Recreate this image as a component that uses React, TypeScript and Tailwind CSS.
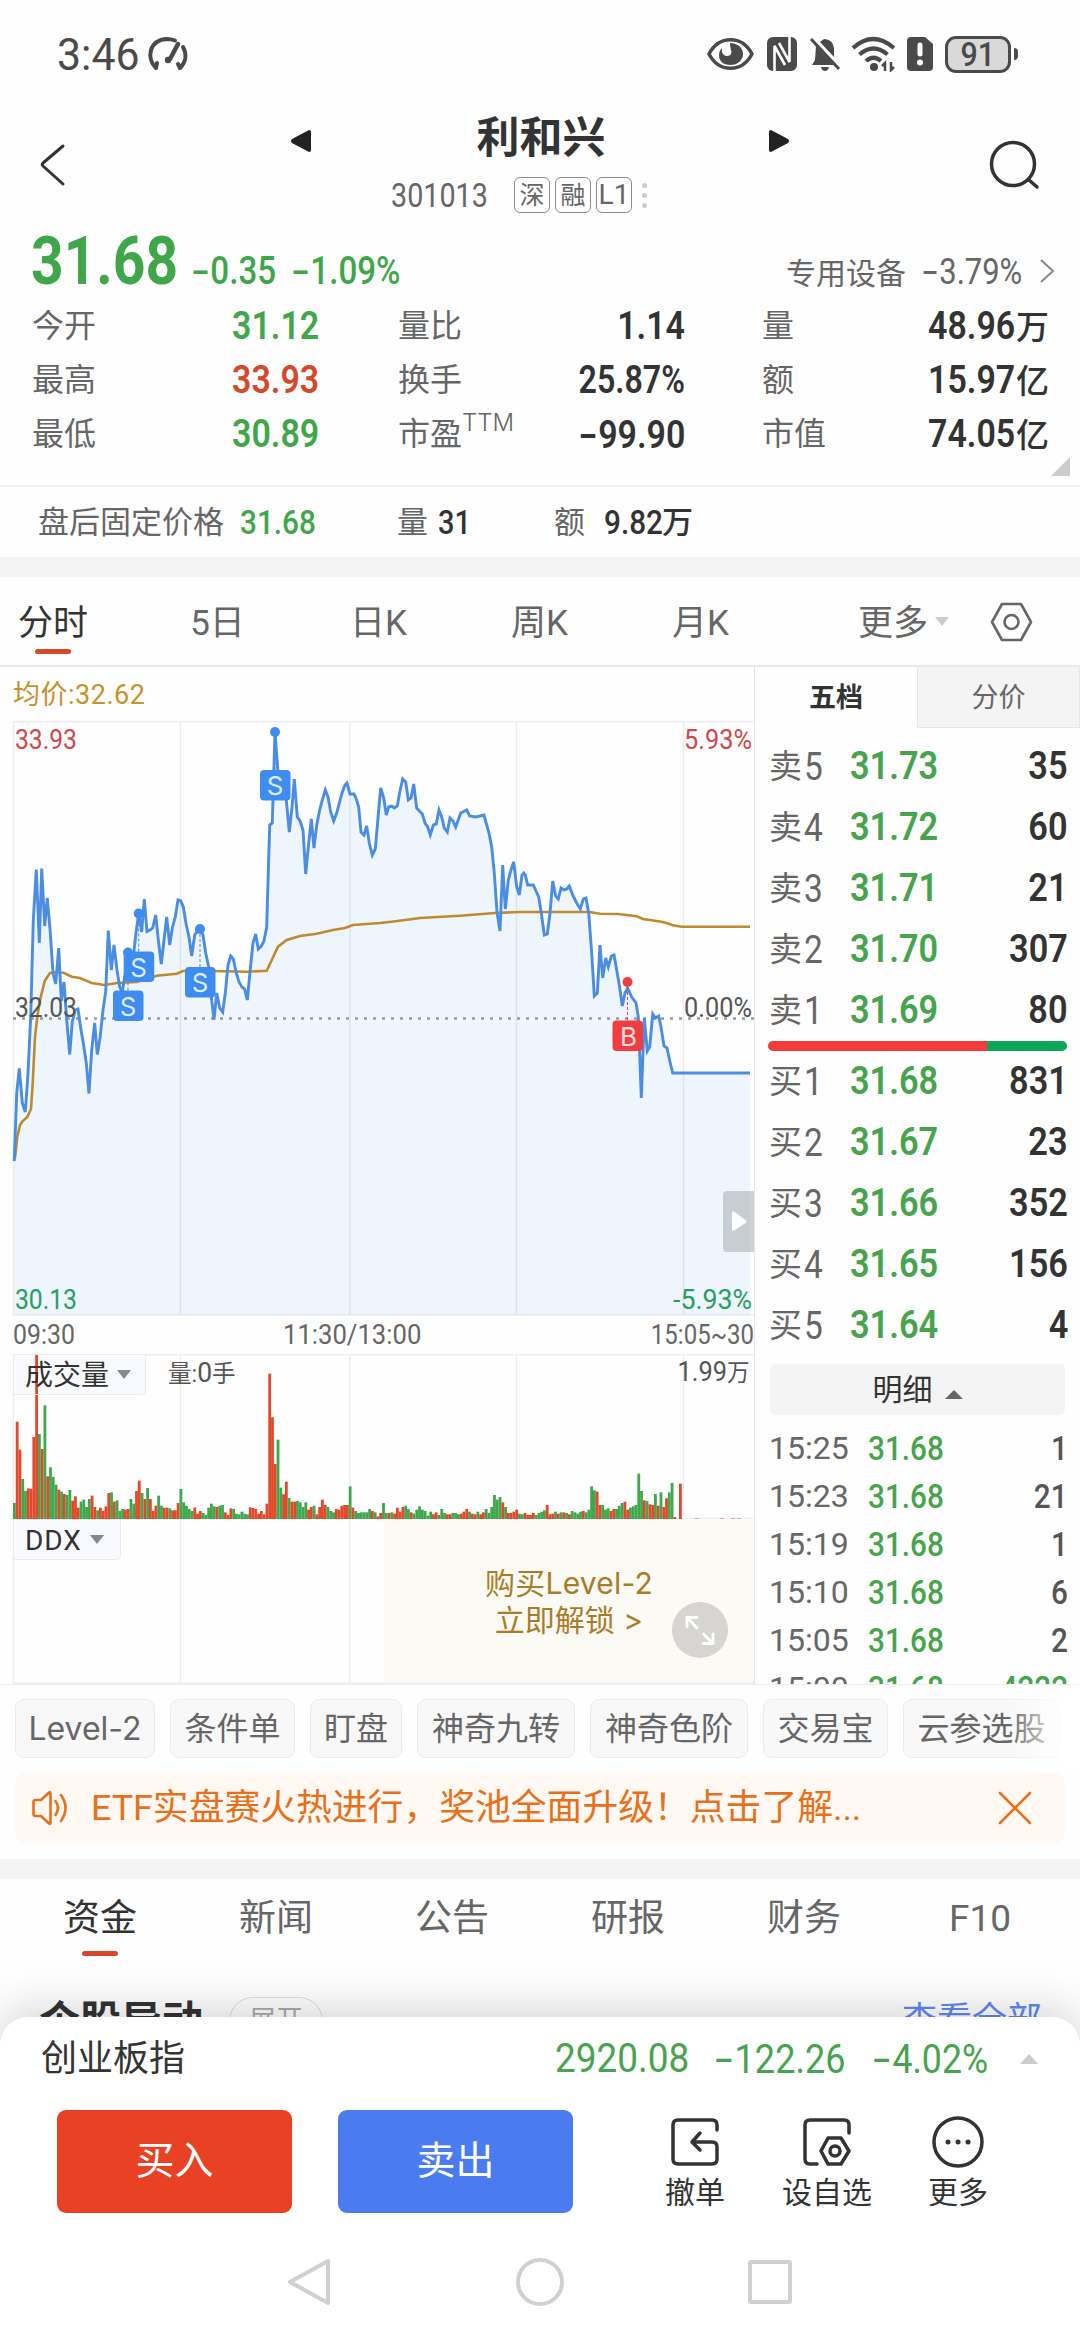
import type { ReactNode } from 'react'
import clsx from 'clsx'

const PRICE_POINTS =
  '14.3,1161 16.7,1093 19.3,1068.5 22.3,1103 25.3,1112 28,1073 30.7,1017 33.3,920 36.3,869.5 39.3,943 41.7,868.5 44.7,926 47.3,898 50.3,933 53,973 55.7,984 58.7,948 61.3,1001 64,982 66.7,1020 69.7,1054.5 72.3,1021.5 75.3,1010 78,1009 80.7,1028 83.3,1043 86.3,1063 89,1093.5 91.7,1050 94.7,1023 97.3,1054.5 100,1038 103,1010 105.7,991.5 108.3,930.5 111.3,970 114,945 117,970 119.7,987 122.3,992 125,975 128,952.5 131,963 133.3,957 136,933 138.7,913 141.7,932 144.3,899 147,931.5 150,930 152.7,928 155.7,915 158.3,940 161.3,964 164,940 166.7,917 169.7,945 172.3,928 175.3,917 178,900 180.7,901 183.3,907 186.3,925 189,937 191.7,956 194.7,935 197.3,931 200,929 203,935 205.7,953 208.7,967 211.3,997 214,1019.5 216.7,993 219.7,1008 222.7,1012 225.3,993 228,965 230.7,956 233.3,959 236.3,973 239,982 242,987 244.7,989 247.3,1000 250,972 253,943 255.7,934 258.3,949 261.3,946 264,941 266.7,927 269.7,825 272.3,823 275,732 278,772 281,783 284,782 286.3,800 289.3,832 292,807 294.3,779 297.3,817 300,821 303,830 305.7,874 308.3,847 311.3,819 314,848 316.7,825 319.7,810 322.3,800 325.3,790 328,797 330.7,812 333.7,821 336.7,813 339.3,803 342,793 345,785 347,783 350,794 354,794 356,798 358.7,807 361,832 364,835 366.7,826 369.3,843 372.3,855 375.3,849 378,818 380.7,788 383.7,798 386.3,815 388.7,807 391.7,806 394.3,808 397.3,806 400,791 402.7,779 405.7,782 408.3,800 411,798 413.7,784 416.7,808 422.3,814 425,823 427.7,827 430.3,835 433.3,825 436.3,824 439,810 441.7,817 444.3,828 447.3,832 450,818 453,821 455.7,827 460.7,813 466.7,810 469.7,816 475.7,817 484,815 486.7,825 489,833 491.7,847 494.3,873 497,912 500,931 502.7,865 505.3,909 508.3,880 511,870 513.7,862 516.7,887 519.3,895 522,875 523.7,873 525.3,875 527.7,885 533.3,885 536,891 538.7,897 541.3,913 544.3,935 547.3,934 550,913 552.7,881 555.7,896 558.3,899 561,888 564,890 566.7,889 569.3,886 572.7,895 576.7,903 580.3,909 583.3,899 586,898 588.7,913 591.7,953 594.3,996 597.3,993 600,945 602.7,978 605.7,958 608.3,967 611.3,956 614,955 616.7,970 619.3,985 622.3,1006 625,993 627.7,988 631.7,997 636,1003 638.3,1017 641.3,1098 644.3,1018 647.3,1051 649.7,1047 652.7,1014 655.3,1018 658.7,1016 661,1027 664,1046 667,1048 670,1062 672.7,1073 750,1073'

const AVG_POINTS =
  '15,1158 17.3,1137 20,1125 22.7,1121 27.3,1117 31,1109 32.7,1083 35,1037 37.3,1017 40,1000 44.7,981 50,973 56,972 63.3,972.7 71.7,976.7 80,978 91.7,983 104.3,985 117,983 136.7,982 156.7,975.7 176.7,973.7 183,971 213,971 247,971.7 266.7,970.7 272.7,958 278,946.7 286.7,940 300,936 316.7,933.7 333,930 345,928 353,925 380,923 391.7,921.7 420,918 460,915.7 495,913 520,912 590,912 600,913.7 618,914 636.7,916.3 643,919 663,922 673,925.3 681.7,926.7 750,926.7'

// r = up minute, g = down minute, the number is the bar height
const VOLUME =
  'g48 r292 r208 g120 g84 r92 r90 r246 r492 g255 r210 g341 r128 g155 g126 g103 r88 g82 r75 g72 g87 r55 r68 r34 g52 g58 g36 g60 r70 r36 g26 r34 r24 r38 r78 g80 r52 g56 g24 g30 r28 r30 g60 g46 r84 r115 g78 r60 g93 r60 r24 r40 g70 g40 r34 r34 g32 r26 r26 r48 g90 g50 g40 g30 g24 r34 r16 r24 g18 g12 g34 g46 g38 r36 g40 g42 r20 r12 r32 g30 g16 g14 g22 g16 g14 r35 r33 r30 r16 r24 r14 r46 r436 r305 r165 g238 g94 r74 r112 g63 r52 r52 g54 g50 g36 g50 r28 r36 g40 r14 r36 r58 r42 g36 g24 g20 r30 r28 r40 r42 r42 g98 r34 g24 g18 g20 g20 g20 g30 r24 g20 r8 r18 g48 g18 r18 g20 r16 r34 r22 r36 g40 g30 r20 g16 g28 g38 g28 g24 g10 g22 r14 r20 g12 g30 g18 r14 r14 g18 g18 g14 r16 r22 r30 g22 r16 r14 g22 r14 r20 g30 g18 g36 g72 g58 g66 r50 g36 r18 r18 r22 r28 g16 g14 r18 r12 r12 r18 g12 g18 g22 g26 r42 r14 r16 g22 r16 g20 r20 g18 r14 g24 g20 g16 g22 r24 g20 g28 g98 g86 r82 r42 g42 g28 g32 r24 r30 g30 g40 g48 r52 r28 g34 g38 g42 g136 g84 r56 g54 r44 r42 g75 r40 g80 r36 r62 g80 g108 r6 r0 r106'

const volumeBars = VOLUME.split(' ').map((item, i) => ({
  x: 14 + i * 2.775,
  h: Number(item.slice(1)) / 3,
  up: item[0] === 'r',
}))

const quoteRows = [
  [
    { label: '今开', value: '31.12', color: 'text-[#3fa64a]' },
    { label: '量比', value: '1.14' },
    { label: '量', value: '48.96', unit: '万' },
  ],
  [
    { label: '最高', value: '33.93', color: 'text-[#d6482c]' },
    { label: '换手', value: '25.87%', scale: 'origin-right scale-x-[0.825]' },
    { label: '额', value: '15.97', unit: '亿' },
  ],
  [
    { label: '最低', value: '30.89', color: 'text-[#3fa64a]' },
    { label: '市盈', sup: 'TTM', value: '-99.90' },
    { label: '市值', value: '74.05', unit: '亿' },
  ],
]

const sells = [
  ['卖5', '31.73', '35'],
  ['卖4', '31.72', '60'],
  ['卖3', '31.71', '21'],
  ['卖2', '31.70', '307'],
  ['卖1', '31.69', '80'],
]

const buys = [
  ['买1', '31.68', '831'],
  ['买2', '31.67', '23'],
  ['买3', '31.66', '352'],
  ['买4', '31.65', '156'],
  ['买5', '31.64', '4'],
]

const trades = [
  ['15:25', '31.68', '1'],
  ['15:23', '31.68', '21'],
  ['15:19', '31.68', '1'],
  ['15:10', '31.68', '6'],
  ['15:05', '31.68', '2'],
  ['15:00', '31.68', '4222'],
]

const chips = [
  { text: 'Level-2', width: 'w-[140px]' },
  { text: '条件单', width: 'w-[125px]' },
  { text: '盯盘', width: 'w-[92px]' },
  { text: '神奇九转', width: 'w-[158px]' },
  { text: '神奇色阶', width: 'w-[158px]' },
  { text: '交易宝', width: 'w-[125px]' },
  { text: '云参选股', width: 'w-[157px]' },
]

const markers = [
  { x: 275, dot: 732, box: 770 },
  { x: 128, dot: 952.5, box: 990.5 },
  { x: 138.7, dot: 913.5, box: 951.5 },
  { x: 200, dot: 929, box: 967 },
]

// Condensed digits, the minus sign is wider than Roboto's own
function Num({ children, className }: { children: string; className?: string }) {
  const negative = children.startsWith('-')
  return (
    <span className={clsx('inline-block whitespace-nowrap', className ?? 'origin-left scale-x-[0.88]')}>
      {negative && <span className="inline-block origin-right scale-x-[1.3] font-['Inter']">-</span>}
      {negative ? children.slice(1) : children}
    </span>
  )
}

function StatusBar() {
  return (
    <div className="flex h-[105px] items-center pt-[3px] text-[#4a4a4a]">
      <div className="w-[90px] pl-[57px] text-[45px]">
        <Num className="origin-left scale-x-[0.95]">3:46</Num>
      </div>
      <svg className="ml-[57px] h-[36px] w-[42px]" viewBox="0 0 42 36" fill="none" stroke="#4a4a4a" strokeWidth="4" strokeLinecap="round">
        <path d="M9 32C-1 22 2 4 20 3q4 0 8 1.500M36 11c4 7 3 15-3 21M9 32l1-5M33 32l-2-4" />
        <path d="M31 8 23 23" strokeWidth="4.500" />
        <circle cx="21" cy="24" r="3.200" fill="#4a4a4a" stroke="none" />
      </svg>

      <div className="ml-[518px] flex items-center">
        <svg className="h-[36px] w-[47px]" viewBox="0 0 47 36">
          <path d="M2 18C12-1 35-1 45 18 35 37 12 37 2 18z" fill="none" stroke="#4a4a4a" strokeWidth="3.500" />
          <path d="M23 7c8 0 13 5 13 11s-5 11-12.500 11S12 25 12 19c0-3 1-5 3-7-1 5 2 8 5 8 4 0 5-3 4-6-.6-3-1-5-1-7z" fill="#4a4a4a" />
        </svg>
        <svg className="ml-[12px] h-[34px] w-[32px]" viewBox="0 0 32 34" fill="none">
          <rect x="1" width="30" height="34" rx="6" fill="#4a4a4a" />
          <path d="M8.500 34V9L19 28M23.500 0v25L13 6" stroke="#fefefe" strokeWidth="2.600" />
        </svg>
        <svg className="ml-[10px] h-[36px] w-[34px]" viewBox="0 0 34 36">
          <path d="M8 10 26 29H4l3-5zM12 6q3-3 5-3 8 1 9 9v9z" fill="#4a4a4a" />
          <path d="M3 3l28 30" stroke="#4a4a4a" strokeWidth="3" />
          <path d="M13 31h8q-1 4-4 4t-4-4z" fill="#4a4a4a" />
        </svg>
        <svg className="ml-[9px] h-[36px] w-[46px]" viewBox="0 0 46 36" fill="none" stroke="#4a4a4a" strokeWidth="4.200">
          <path d="M2 12q20-18 41 0M8.500 18.500q14-12 28 0M15 25q7.500-6.500 15 0" />
          <circle cx="23" cy="31" r="4" fill="#4a4a4a" stroke="none" />
          <path d="M34 35v-8l-3 3M40 26v8l3-3" strokeWidth="2.500" />
        </svg>
        <svg className="ml-[9px] h-[34px] w-[28px]" viewBox="0 0 28 34">
          <path d="M5 0h14l8 7v23q0 4-4 4H5q-4 0-4-4V4q0-4 4-4z" fill="#4a4a4a" />
          <path d="M14 8v9" stroke="#fff" strokeWidth="5" strokeLinecap="round" />
          <circle cx="14" cy="25.500" r="3" fill="#fff" />
        </svg>
        <div className="ml-[11px] flex h-[37px] w-[66px] items-center justify-center rounded-[11px] border-[3px] border-[#4a4a4a] bg-[#d9d9d9] text-[33px] font-medium">
          <Num className="scale-x-[0.92]">91</Num>
        </div>
        <div className="ml-[3px] h-[12px] w-[4px] rounded-r-full bg-[#4a4a4a]" />
      </div>
    </div>
  )
}

function Tag({ children }: { children: ReactNode }) {
  return (
    <span className="mr-[5px] flex h-[36px] w-[36px] items-center justify-center rounded-[6px] border border-[#8c8c8c] text-[25px]">
      {children}
    </span>
  )
}

function Header() {
  return (
    <div className="flex h-[116px] text-[#333]">
      <svg className="mt-[38px] ml-[39px] h-[44px] w-[28px]" viewBox="0 0 28 44" fill="none" stroke="#333" strokeWidth="3" strokeLinecap="round" strokeLinejoin="round">
        <path d="M24 3 4 20q-1.500 1.500 0 3L24 41" />
      </svg>
      <div className="ml-[224px] flex w-[498px] flex-col">
        <div className="flex h-[64px] items-center justify-between">
          <svg className="mt-[8px] h-[22px] w-[20px]" viewBox="0 0 20 22">
            <path d="M18 0q2 0 2 2v18q0 2-2 2L1 13q-2-2 0-4z" fill="#222" />
          </svg>
          <h1 className="mt-[3px] ml-[2px] text-[43px] font-bold">利和兴</h1>
          <svg className="mt-[8px] h-[22px] w-[20px]" viewBox="0 0 20 22">
            <path d="M2 0Q0 0 0 2v18q0 2 2 2l17-9q2-2 0-4z" fill="#222" />
          </svg>
        </div>
        <div className="flex h-[52px] items-center pl-[100px] text-[#666]">
          <div className="w-[123px] text-[33px]">
            <Num className="origin-left scale-x-[0.87]">301013</Num>
          </div>
          <Tag>深</Tag>
          <Tag>融</Tag>
          <Tag>
            <span className="text-[28px]">L1</span>
          </Tag>
          <div className="ml-[5px] flex flex-col gap-[5px]">
            <span className="h-[5px] w-[5px] rounded-full bg-[#ccc]" />
            <span className="h-[5px] w-[5px] rounded-full bg-[#ccc]" />
            <span className="h-[5px] w-[5px] rounded-full bg-[#ccc]" />
          </div>
        </div>
      </div>
      <svg className="mt-[33px] ml-[199px] h-[54px] w-[54px]" viewBox="0 0 54 54" fill="none" stroke="#333" strokeWidth="3.500" strokeLinecap="round">
        <circle cx="25" cy="26" r="21.500" />
        <path d="M41 42l8 7" />
      </svg>
    </div>
  )
}

function Quote() {
  return (
    <div className="text-[#666]">
      <div className="flex h-[78px] items-baseline pt-[7px] text-[#3fa64a]">
        <div className="w-[163px] pl-[31px] text-[67px] font-bold">
          <Num className="origin-left scale-x-[0.85]">31.68</Num>
        </div>
        <div className="ml-[32px] w-[100px] text-[39px] font-medium">
          <Num className="origin-left scale-x-[0.85]">-0.35</Num>
        </div>
        <div className="w-[130px] text-[39px] font-medium">
          <Num className="origin-left scale-x-[0.85]">-1.09%</Num>
        </div>
        <div className="ml-[361px] text-[30px] text-[#666]">专用设备</div>
        <div className="ml-[19px] w-[113px] text-[36px] text-[#666]">
          <Num className="origin-left scale-x-[0.86]">-3.79%</Num>
        </div>
        <svg className="ml-[1px] h-[26px] w-[16px]" viewBox="0 0 16 26" fill="none" stroke="#888" strokeWidth="2">
          <path d="M2 2l12 11L2 24" />
        </svg>
      </div>

      {quoteRows.map((row, r) => (
        <div key={r} className="grid h-[54px] grid-cols-[287px_286px_286px] items-center gap-x-[79px] pl-[32px]">
          {row.map((cell, c) => (
            <div
              key={c}
              className={clsx(
                'flex items-center justify-between',
                c === 0 ? 'w-[287px]' : c === 1 ? 'w-[287px]' : '-ml-px w-[287px]',
              )}
            >
              <div className="flex text-[32px]">
                {cell.label}
                {'sup' in cell && <span className="-mt-[7px] font-['Inter'] text-[24px] font-light">{cell.sup}</span>}
              </div>
              <div className={clsx('flex items-baseline text-[39px] font-semibold', cell.color ?? 'text-[#333]')}>
                <Num className={cell.scale ?? 'origin-right scale-x-[0.87]'}>{cell.value}</Num>
                {cell.unit && <span className="ml-px text-[33px] font-medium">{cell.unit}</span>}
              </div>
            </div>
          ))}
        </div>
      ))}

      <div className="flex h-[24px] justify-end pr-[10px]">
        <svg className="-mt-[4px] h-[19px] w-[19px]" viewBox="0 0 19 19">
          <path d="M19 0v19H0z" fill="#ccc" />
        </svg>
      </div>
      <div className="flex h-[72px] items-center border-t-2 border-[#f2f2f2] text-[31px]">
        <span className="ml-[38px] w-[202px]">盘后固定价格</span>
        <span className="w-[157px] text-[33px] font-medium text-[#3fa64a]">
          <Num className="origin-left scale-x-[0.9]">31.68</Num>
        </span>
        <span className="w-[41px]">量</span>
        <span className="w-[116px] text-[33px] font-medium text-[#333]">
          <Num>31</Num>
        </span>
        <span className="w-[50px]">额</span>
        <span className="w-[58px] text-[33px] font-medium text-[#333]">
          <Num className="origin-left scale-x-[0.9]">9.82</Num>
        </span>
        <span className="font-medium text-[#333]">万</span>
      </div>
      <div className="h-[20px] bg-[#f4f4f4]" />
    </div>
  )
}

function ChartTabs() {
  return (
    <div className="flex h-[90px] border-b-2 border-[#e9e9e9] pt-[23px] text-[35px] text-[#666]">
      <div className="w-[137px] pl-[18px] text-[#333]">
        <div className="flex h-[46px] w-[70px] items-center">分时</div>
        <div className="mt-[3px] ml-[17px] h-[5px] w-[36px] rounded-full bg-[#d9472b]" />
      </div>
      {['5日', '日K', '周K', '月K'].map((tab) => (
        <div key={tab} className="flex h-[46px] w-[161px] items-center justify-center">
          {tab}
        </div>
      ))}
      <div className="ml-[77px] flex h-[46px] w-[77px] items-center">更多</div>
      <svg className="mt-[17px] h-[9px] w-[14px]" viewBox="0 0 14 9">
        <path d="M0 0h14L7 9z" fill="#ccc" />
      </svg>
      <svg className="mt-[1px] ml-[41px] h-[42px] w-[44px]" viewBox="0 0 44 42" fill="none" stroke="#666" strokeWidth="2.600" strokeLinejoin="round">
        <path d="M12 3h19l10 18-10 18H12L2 21z" />
        <circle cx="21.500" cy="21" r="7" />
      </svg>
    </div>
  )
}

function PriceChart() {
  return (
    <svg className="block h-[595px] w-[754px]" viewBox="0 721 754 595" fontFamily="Roboto" fontSize="27">
      <polygon points={`14.3,1315 ${PRICE_POINTS} 750,1315`} fill="#eef5fd" />
      <g stroke="#000" strokeOpacity="0.07" strokeWidth="1.500">
        <path d="M13 721.500h741M13 1315h741M13.500 721v594M180.500 721v594M350 721v594M516.500 721v594M683.500 721v594" />
      </g>
      <path d="M13 1018.500h741" stroke="#999" strokeWidth="2.500" strokeDasharray="3 6" />
      <polyline points={AVG_POINTS} fill="none" stroke="#c08a2c" strokeWidth="2.600" />
      <polyline points={PRICE_POINTS} fill="none" stroke="#4a8de2" strokeWidth="2.900" />

      {markers.map((m) => (
        <g key={m.x}>
          <path d={`M${m.x} ${m.dot}V${m.box}`} stroke="#3f8cf0" strokeDasharray="3 2" />
          <circle cx={m.x} cy={m.dot} r="5" fill="#3f8cf0" />
          <rect x={m.x - 15} y={m.box} width="30.500" height="30.500" rx="4" fill="#3f8cf0" />
          <text x={m.x} y={m.box + 25} textAnchor="middle" fontFamily="Inter" fontSize="26" fill="#dcebff">
            S
          </text>
        </g>
      ))}
      <path d="M627.500 982v40" stroke="#e0405a" strokeDasharray="3 2" />
      <circle cx="627.500" cy="982" r="5" fill="#f13d40" />
      <rect x="612.500" y="1020.500" width="30.500" height="30.500" rx="4" fill="#f13d40" />
      <text x="628.500" y="1045.500" textAnchor="middle" fontFamily="Inter" fontSize="26" fill="#ffe0e0">
        B
      </text>

      <text x="15" y="748.500" fill="#d04848" textLength="62" lengthAdjust="spacingAndGlyphs">33.93</text>
      <text x="684" y="748.500" fill="#d04848" textLength="68" lengthAdjust="spacingAndGlyphs">5.93%</text>
      <text x="15" y="1016.500" fill="#555" textLength="62" lengthAdjust="spacingAndGlyphs">32.03</text>
      <text x="684" y="1016.500" fill="#555" textLength="68" lengthAdjust="spacingAndGlyphs">0.00%</text>
      <text x="15" y="1308.500" fill="#26a060" textLength="62" lengthAdjust="spacingAndGlyphs">30.13</text>
      <text x="673" y="1308.500" fill="#26a060" textLength="79" lengthAdjust="spacingAndGlyphs">-5.93%</text>

      <path d="M754 1191h-27q-4 0-4 4v53q0 4 4 4h27z" fill="#a9abae" fillOpacity="0.550" />
      <path d="M732 1212.500q0-2 2-1l12 9q1 1 0 2l-12 8q-2 1-2-1z" fill="#fff" />
    </svg>
  )
}

function IndicatorTab({ label, width }: { label: string; width: string }) {
  return (
    <div className={clsx('absolute top-0 left-[13px] flex h-[41px] items-center rounded-br-[4px] border border-[#ebebef] pt-[2px] pl-[11px] text-[28px] text-[#333]', width)}>
      {label}
      <svg className="mb-[2px] ml-[8px] h-[9px] w-[14px]" viewBox="0 0 14 9">
        <path d="M0 0h14L7 9z" fill="#888" />
      </svg>
    </div>
  )
}

function VolumeChart() {
  return (
    <div className="relative h-[165px]">
      <svg className="block h-[165px] w-[754px]" viewBox="0 0 754 165">
        <path d="M13 .7h741M13.500 0v165M180.500 0v165M350 0v165M516.500 0v165M683.500 0v165M13 164.500h741" stroke="#ededed" strokeWidth="1.500" fill="none" />
        <rect x="14" y="1" width="132" height="39" fill="#f9faff" />
        {volumeBars.map((bar, i) => (
          <rect key={i} x={bar.x - 1} y={165 - bar.h} width="2.800" height={bar.h} fill={bar.up ? '#e3482b' : '#3fa84c'} />
        ))}
        <path d="M695 164.500h4M720 164.500h4M731 164.500h4M737 164.500h4" stroke="#e8a090" />
      </svg>
      <IndicatorTab label="成交量" width="w-[133px]" />
      <div className="absolute top-[6px] left-[168px] origin-left scale-x-[0.98] text-[24px] text-[#555]">
        量:<span className="text-[27px]">0</span>手
      </div>
      <div className="absolute top-[5px] right-[4px] origin-right scale-x-[0.94] text-[27px] text-[#555]">
        1.99<span className="text-[24px]">万</span>
      </div>
    </div>
  )
}

function DdxPanel() {
  return (
    <div className="relative flex h-[165px] justify-end">
      <svg className="absolute inset-0 h-[165px] w-[754px]" viewBox="0 0 754 165">
        <path d="M13.500 0v164M180.500 0v164M350 0v164M13 164.300h741" stroke="#ededed" strokeWidth="1.500" />
        <rect x="14" y="1" width="107" height="39" fill="#f9faff" />
      </svg>
      <IndicatorTab label="DDX" width="w-[108px] tracking-[0.9px]" />
      <div className="flex h-[163px] w-[370px] flex-col items-center pt-[46px] font-['Inter','Noto_Sans_CJK_SC',sans-serif] text-[30px] leading-[37px] text-[#ab7c28]">
        <span className="relative tracking-[0.2px]">购买Level-2</span>
        <span className="relative">立即解锁 &gt;</span>
      </div>
      <div className="absolute top-[1px] right-0 -z-10 h-[163px] w-[370px] bg-[#fbfaf5]" />
      <svg className="absolute top-[83px] right-[26px] h-[56px] w-[56px]" viewBox="0 0 56 56" fill="none" stroke="#fff" strokeWidth="2.800" strokeLinecap="round" strokeLinejoin="round">
        <circle cx="28" cy="28" r="28" fill="#d6d5d1" stroke="none" />
        <path d="M15 25V15.500h10M16 16.500l9 9.500M41 32v9.500H31M40 40.500 31.500 32" />
      </svg>
    </div>
  )
}

function BookRow({ row }: { row: string[] }) {
  return (
    <div className="flex h-[61px] items-center pr-[12px] pl-[14px]">
      <span className="flex w-[81px] items-center text-[33px] text-[#666]">
        {row[0][0]}
        <span className="ml-[2px] text-[38px]">
          <Num className="origin-left scale-x-[0.88]">{row[0][1]}</Num>
        </span>
      </span>
      <span className="text-[39px] font-semibold text-[#45a44d]">
        <Num>{row[1]}</Num>
      </span>
      <span className="ml-auto text-[39px] font-semibold text-[#333]">
        <Num className="origin-right scale-x-[0.88]">{row[2]}</Num>
      </span>
    </div>
  )
}

function OrderBook() {
  return (
    <div className="h-[1017px] w-[325px] overflow-hidden">
      <div className="flex h-[61px] text-[27px]">
        <div className="flex flex-1 items-center justify-center pt-[2px] font-bold text-[#333]">五档</div>
        <div className="flex w-[163px] items-center justify-center border border-t-0 border-[#e6e6e6] bg-[#f4f4f4] pt-[2px] text-[#666]">
          分价
        </div>
      </div>
      <div className="pt-[8px]">
        {sells.map((row) => (
          <BookRow key={row[0]} row={row} />
        ))}
      </div>
      <div className="ml-[13px] flex h-[10px] w-[299px] overflow-hidden rounded-full">
        <div className="w-[219px] bg-[#f33c3c]" />
        <div className="flex-1 bg-[#0ca658]" />
      </div>
      {buys.map((row) => (
        <BookRow key={row[0]} row={row} />
      ))}
      <div className="mt-[8px] ml-[15px] flex h-[51px] w-[295px] items-center justify-center rounded-[5px] bg-[#f4f4f4] text-[30px] text-[#333]">
        明细
        <svg className="mt-[9px] ml-[12px] h-[9px] w-[18px]" viewBox="0 0 18 9">
          <path d="M9 0l9 9H0z" fill="#666" />
        </svg>
      </div>
      <div className="pt-[9px]">
        {trades.map((row) => (
          <div key={row[0]} className="flex h-[48px] items-center pr-[12px] pl-[14px] text-[33px]">
            <span className="w-[99px] text-[32px] text-[#666]">{row[0]}</span>
            <span className="font-medium text-[#45a44d]">
              <Num className="origin-left scale-x-[0.9]">{row[1]}</Num>
            </span>
            <span className={clsx('ml-auto font-medium', row[2] === '4222' ? 'text-[#45a44d]' : 'text-[#555]')}>
              <Num className="origin-right scale-x-[0.9]">{row[2]}</Num>
            </span>
          </div>
        ))}
      </div>
    </div>
  )
}

function Shortcuts() {
  return (
    <div className="relative flex gap-[15px] overflow-hidden border-t border-[#ececec] pt-[14px] pb-[15px] pl-[15px] font-['Inter','Noto_Sans_CJK_SC',sans-serif]">
      {chips.map((chip) => (
        <div
          key={chip.text}
          className={clsx(
            'flex h-[59px] shrink-0 items-center justify-center rounded-[9px] border border-[#ebebeb] bg-[#f8f8f8] text-[32px] whitespace-nowrap text-[#666]',
            chip.width,
          )}
        >
          {chip.text}
        </div>
      ))}
      <div className="absolute top-0 right-0 h-full w-[72px] bg-linear-to-r from-white/0 via-white/60 to-white" />
    </div>
  )
}

function Banner() {
  return (
    <div className="mx-[15px] mb-[16px] flex h-[70px] items-center rounded-[10px] bg-[#fff8f3] text-[#e8701a]">
      <svg className="ml-[16px] h-[38px] w-[40px]" viewBox="0 0 40 38" fill="none" stroke="#e8701a" strokeWidth="2.600" strokeLinecap="round" strokeLinejoin="round">
        <path d="M2.500 13q0-2 2-2h5.500L18 3.500q1.500-1 1.500 1v29q0 2-1.500 1L10 27H4.500q-2 0-2-2zM24.500 12q5 7 0 14M30 6q9 13 0 26" />
      </svg>
      <span className="ml-[20px] pt-px text-[35.800px] whitespace-nowrap">ETF实盘赛火热进行，奖池全面升级！点击了解...</span>
      <svg className="mr-[33px] ml-auto h-[34px] w-[34px]" viewBox="0 0 34 34" stroke="#e8701a" strokeWidth="2.600" strokeLinecap="round">
        <path d="M2 2l30 30M32 2 2 32" />
      </svg>
    </div>
  )
}

function InfoTabs() {
  return (
    <div className="border-t-[20px] border-[#f4f4f4]">
      <div className="flex h-[78px] px-[12px] text-[37px] text-[#666]">
        {['资金', '新闻', '公告', '研报', '财务', 'F10'].map((tab, i) => (
          <div key={tab} className={clsx('flex w-[176px] flex-col items-center', i === 0 && 'text-[#333]')}>
            <div className="flex h-[72px] items-center pt-[7px]">{tab}</div>
            {i === 0 && <div className="h-[5px] w-[36px] rounded-full bg-[#d9472b]" />}
          </div>
        ))}
      </div>
      <div className="flex h-[100px] pt-[40px] pr-[38px] pl-[39px]">
        <span className="pt-[4px] text-[41px] font-bold text-[#333]">个股异动</span>
        <span className="ml-[26px] flex h-[48px] w-[94px] items-center justify-center rounded-full border border-[#ddd] text-[27px] text-[#aaa]">
          展开
        </span>
        <span className="ml-auto pt-[6px] text-[35px] text-[#5f89ee]">查看全部</span>
      </div>
    </div>
  )
}

function BottomSheet() {
  return (
    <div className="relative -mt-[40px] h-[323px] rounded-t-[28px] bg-white shadow-[0_-8px_44px_rgba(0,0,0,0.16)]">
      <div className="flex h-[83px] items-center pl-[41px] text-[41px] text-[#45a44d]">
        <span className="w-[514px] text-[36px] text-[#333]">创业板指</span>
        <span className="w-[163px]">
          <Num className="origin-left scale-x-[0.9]">2920.08</Num>
        </span>
        <span className="w-[158px]">
          <Num className="origin-left scale-x-[0.88]">-122.26</Num>
        </span>
        <span className="w-[144px]">
          <Num className="origin-left scale-x-[0.87]">-4.02%</Num>
        </span>
        <svg className="h-[10px] w-[18px]" viewBox="0 0 18 10">
          <path d="M9 0l9 10H0z" fill="#ccc" />
        </svg>
      </div>

      <div className="mt-[10px] flex h-[103px] pl-[57px]">
        <button className="mr-[46px] w-[235px] rounded-[9px] bg-[#e84124] text-[39px] text-white">买入</button>
        <button className="w-[235px] rounded-[9px] bg-[#4a7cf0] text-[39px] text-white">卖出</button>
        <div className="ml-[73px] flex w-[98px] flex-col items-center pt-[5px] text-[30px] text-[#333]">
          <svg className="h-[54px] w-[54px]" viewBox="0 0 54 54" fill="none" stroke="#333" strokeWidth="3.500" strokeLinecap="round" strokeLinejoin="round">
            <path d="M49 15v-5q0-5-5-5H10q-5 0-5 5v34q0 5 5 5h34q5 0 5-5V32q0-5-5-5H25M32 18l-8 9 8 8" />
          </svg>
          <span className="mt-[9px] whitespace-nowrap">撤单</span>
        </div>
        <div className="ml-[34px] flex w-[98px] flex-col items-center pt-[5px] text-[30px] text-[#333]">
          <svg className="h-[54px] w-[54px]" viewBox="0 0 54 54" fill="none" stroke="#333" strokeWidth="3.500" strokeLinecap="round" strokeLinejoin="round">
            <path d="M49 18V10q0-5-5-5H10q-5 0-5 5v34q0 5 5 5h7M28 23h13l8 13-8 13H28l-7-13z" />
            <circle cx="35" cy="36" r="5" />
          </svg>
          <span className="mt-[9px] whitespace-nowrap">设自选</span>
        </div>
        <div className="ml-[33px] flex w-[98px] flex-col items-center pt-[5px] text-[30px] text-[#333]">
          <svg className="h-[54px] w-[54px]" viewBox="0 0 54 54" fill="none" stroke="#333" strokeWidth="3.500">
            <circle cx="27" cy="27" r="24" />
            <path d="M17 27h.1M27 27h.1M37 27h.1" strokeWidth="5" strokeLinecap="round" />
          </svg>
          <span className="mt-[9px] whitespace-nowrap">更多</span>
        </div>
      </div>

      {/* system navigation */}
      <div className="mt-[43px] flex h-[52px] items-center pl-[285px]">
        <svg className="h-[52px] w-[48px]" viewBox="0 0 48 52" fill="none" stroke="#d0d0d0" strokeWidth="4" strokeLinejoin="round">
          <path d="M43 5v42L5 26z" />
        </svg>
        <div className="ml-[183px] h-[48px] w-[48px] rounded-full border-4 border-[#d0d0d0]" />
        <div className="ml-[184px] h-[44px] w-[44px] rounded-[3px] border-4 border-[#d0d0d0]" />
      </div>
    </div>
  )
}

export default function App() {
  return (
    <div className="isolate h-[2340px] w-[1080px] overflow-hidden bg-[#fefefe] font-['Roboto','Noto_Sans_CJK_SC',sans-serif] leading-none">
      <StatusBar />
      <Header />
      <Quote />
      <ChartTabs />
      <div className="flex h-[1017px]">
        <div className="w-[755px] border-r border-[#e6e6e6]">
          <div className="flex h-[54px] items-center pt-[2px] pl-[13px] text-[27px] tracking-[0.5px] text-[#c8922b]">均价:32.62</div>
          <PriceChart />
          <div className="grid h-[38px] grid-cols-[270px_270px_1fr] items-center pt-px pl-[13px] text-[27px] text-[#666]">
            <Num className="origin-left scale-x-[0.92]">09:30</Num>
            <Num className="origin-left scale-x-[0.95]">11:30/13:00</Num>
            <Num className="origin-right scale-x-[0.89] text-right">15:05~30</Num>
          </div>
          <VolumeChart />
          <DdxPanel />
        </div>
        <OrderBook />
      </div>
      <Shortcuts />
      <Banner />
      <InfoTabs />
      <BottomSheet />
    </div>
  )
}
